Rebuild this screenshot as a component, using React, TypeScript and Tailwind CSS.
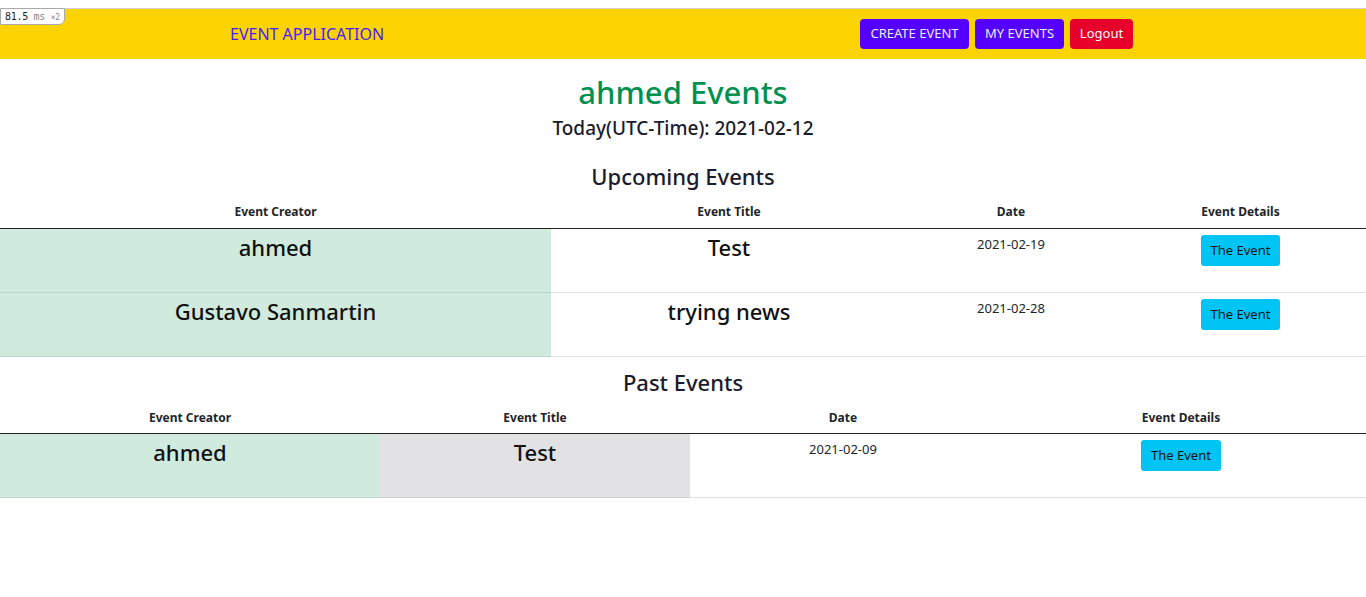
import React from "react";

const upcoming = [
  { creator: "ahmed", title: "Test", date: "2021-02-19" },
  { creator: "Gustavo Sanmartin", title: "trying news", date: "2021-02-28" },
];

const past = [{ creator: "ahmed", title: "Test", date: "2021-02-09" }];

const EventButton = () => (
  <button className="bg-[#00c4f3] text-[#111] text-[13px] rounded-[3px] h-[31px] px-[10px] leading-none">
    The Event
  </button>
);

const App = () => {
  return (
    <div className="min-h-screen bg-white font-['Noto_Sans',sans-serif] text-[#212529] relative">
      {/* perf badge overlay */}
      <div className="absolute left-0 top-[8px] h-[17px] pl-[4px] pr-[4px] bg-white border border-[#aaa] rounded-br-[6px] text-[10px] leading-[15px] font-['DejaVu_Sans_Mono',monospace] text-[#222] tracking-[-0.3px]">
        81.5 <span className="text-[#888]">ms</span> <span className="text-[#888] text-[8px]">×2</span>
      </div>

      <div className="h-[9px] border-b border-[#d0d0d0]" />

      {/* navbar */}
      <nav className="h-[50px] bg-[#fbd300] flex items-center">
        <div className="w-[230px]" />
        <a className="text-[16px] text-[#4a1cff]">EVENT APPLICATION</a>
        <div className="flex-1" />
        <div className="flex gap-[6px] mr-[233px]">
          <button className="bg-[#5500ff] text-[#e6f0ff] text-[13px] rounded-[4px] h-[30px] w-[109px]">
            CREATE EVENT
          </button>
          <button className="bg-[#5500ff] text-[#e6f0ff] text-[13px] rounded-[4px] h-[30px] w-[89px]">
            MY EVENTS
          </button>
          <button className="bg-[#e6002a] text-white text-[13px] rounded-[4px] h-[30px] w-[63px]">
            Logout
          </button>
        </div>
      </nav>

      <h1 className="text-center text-[31px] font-medium text-[#009150] mt-[13px] leading-[40px]">
        ahmed Events
      </h1>
      <h2 className="text-center text-[19px] font-medium text-[#1b1b2b] mt-[4px] leading-[24px]">
        Today(UTC-Time): 2021-02-12
      </h2>

      {/* upcoming */}
      <h3 className="text-center text-[22px] font-medium text-[#1b1b2b] mt-[21px] leading-[30px]">
        Upcoming Events
      </h3>
      <div className="grid grid-cols-[551px_356px_208px_1fr] text-center">
        {["Event Creator", "Event Title", "Date", "Event Details"].map((h) => (
          <div key={h} className="text-[12px] font-bold h-[38px] pt-[12px] leading-[17px] border-b border-[#222]">
            {h}
          </div>
        ))}
        {upcoming.map((e) => (
          <React.Fragment key={e.creator}>
            <div className="bg-[#d0ebde] h-[64px] border-b border-[#bcd6c9] text-[22px] font-medium text-[#111] pt-[2px]">
              {e.creator}
            </div>
            <div className="h-[64px] border-b border-[#dee2e6] text-[22px] font-medium text-[#111] pt-[2px]">
              {e.title}
            </div>
            <div className="h-[64px] border-b border-[#dee2e6] text-[13px] pt-[6px]">{e.date}</div>
            <div className="h-[64px] border-b border-[#dee2e6] pt-[6px]">
              <EventButton />
            </div>
          </React.Fragment>
        ))}
      </div>

      {/* past */}
      <h3 className="text-center text-[22px] font-medium text-[#1b1b2b] mt-[10px] leading-[30px]">
        Past Events
      </h3>
      <div className="grid grid-cols-[380px_310px_306px_1fr] text-center">
        {["Event Creator", "Event Title", "Date", "Event Details"].map((h) => (
          <div key={h} className="text-[12px] font-bold h-[37px] pt-[12px] leading-[17px] border-b border-[#222]">
            {h}
          </div>
        ))}
        {past.map((e) => (
          <React.Fragment key={e.creator}>
            <div className="bg-[#d0ebde] h-[64px] border-b border-[#bcd6c9] text-[22px] font-medium text-[#111] pt-[2px]">
              {e.creator}
            </div>
            <div className="bg-[#e2e2e4] h-[64px] border-b border-[#d0d0d2] text-[22px] font-medium text-[#111] pt-[2px]">
              {e.title}
            </div>
            <div className="h-[64px] border-b border-[#dee2e6] text-[13px] pt-[6px]">{e.date}</div>
            <div className="h-[64px] border-b border-[#dee2e6] pt-[6px]">
              <EventButton />
            </div>
          </React.Fragment>
        ))}
      </div>
    </div>
  );
};

export default App;
